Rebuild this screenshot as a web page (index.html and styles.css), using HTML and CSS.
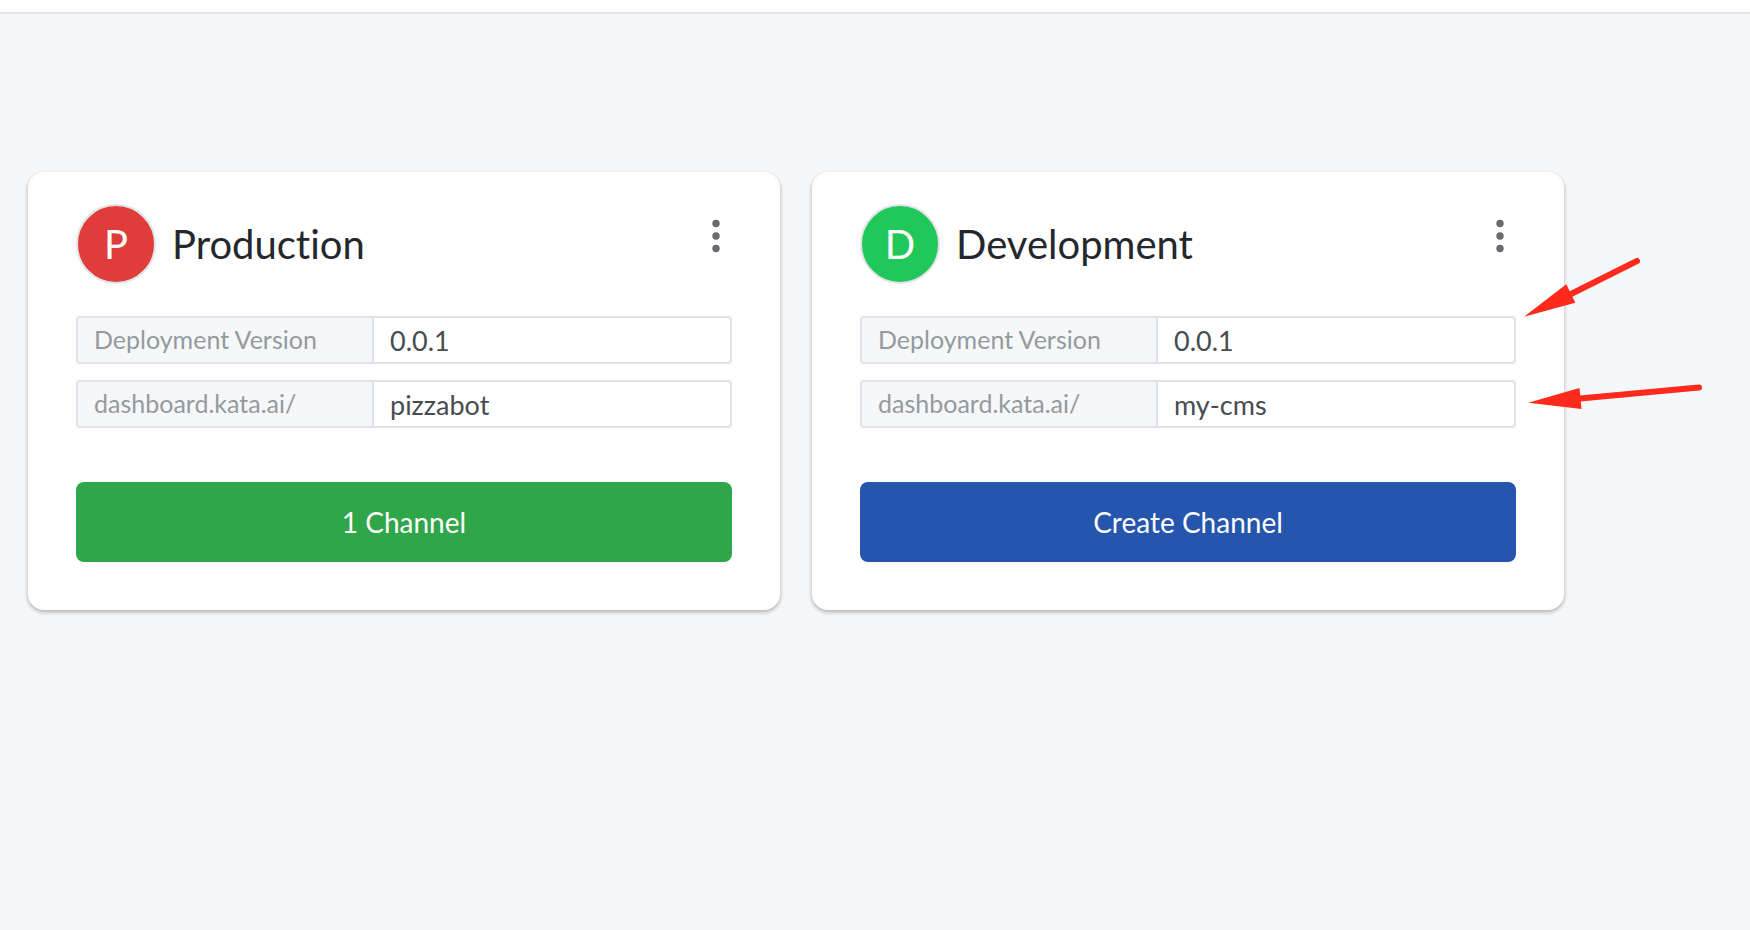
FILE: index.html
```html
<!DOCTYPE html>
<html lang="en">
<head>
<meta charset="utf-8">
<meta name="viewport" content="width=device-width, initial-scale=1">
<title>Environments</title>
<link rel="stylesheet" href="styles.css">
</head>
<body>
<header class="topbar"></header>
<main class="environments">
  <section class="card">
    <div class="card-header">
      <span class="avatar avatar-production">P</span>
      <h2 class="card-title">Production</h2>
      <button class="menu-button" type="button" aria-label="Production options">
        <svg class="menu-icon" viewBox="0 0 8 34" aria-hidden="true"><circle cx="4" cy="4.5" r="3.7"/><circle cx="4" cy="17" r="3.7"/><circle cx="4" cy="29.5" r="3.7"/></svg>
      </button>
    </div>
    <div class="fields">
      <div class="field">
        <label class="field-label" for="prod-version">Deployment Version</label>
        <input class="field-input" id="prod-version" type="text" value="0.0.1">
      </div>
      <div class="field">
        <label class="field-label" for="prod-url">dashboard.kata.ai/</label>
        <input class="field-input" id="prod-url" type="text" value="pizzabot">
      </div>
    </div>
    <button class="action action-success" type="button">1 Channel</button>
  </section>
  <section class="card">
    <div class="card-header">
      <span class="avatar avatar-development">D</span>
      <h2 class="card-title">Development</h2>
      <button class="menu-button" type="button" aria-label="Development options">
        <svg class="menu-icon" viewBox="0 0 8 34" aria-hidden="true"><circle cx="4" cy="4.5" r="3.7"/><circle cx="4" cy="17" r="3.7"/><circle cx="4" cy="29.5" r="3.7"/></svg>
      </button>
    </div>
    <div class="fields">
      <div class="field">
        <label class="field-label" for="dev-version">Deployment Version</label>
        <input class="field-input" id="dev-version" type="text" value="0.0.1">
      </div>
      <div class="field">
        <label class="field-label" for="dev-url">dashboard.kata.ai/</label>
        <input class="field-input" id="dev-url" type="text" value="my-cms">
      </div>
    </div>
    <button class="action action-primary" type="button">Create Channel</button>
    <svg class="arrows" viewBox="0 0 185 160" aria-hidden="true">
      <path class="arrow-shaft" d="M51 42 117 9M60 146.5 179 135.5"/>
      <path class="arrow-head" d="M4 64.700 46.300 32.300 55.300 50.700ZM8.300 150.700 59.500 136 61.500 157Z"/>
    </svg>
  </section>
</main>
</body>
</html>
```

FILE: styles.css
```css
* {
  box-sizing: border-box;
}

body {
  margin: 0;
  min-height: 100vh;
  background: #f5f7f9;
  color: #24282d;
  font-family: Lato, "Open Sans", sans-serif;
  font-size: 25px;
  font-variant-ligatures: none;
}

.topbar {
  height: 14px;
  background: #fff;
  border-bottom: 2px solid #e0e4e8;
}

.environments {
  display: grid;
  grid-template-columns: repeat(2, minmax(0, 752px));
  gap: 32px;
  padding: 158px 28px 48px;
}

.card {
  position: relative;
  padding: 32px 48px 48px;
  background: #fff;
  border-radius: 16px;
  box-shadow: 0 2px 4px rgba(0, 0, 0, 0.3);
}

.card-header {
  display: flex;
  align-items: center;
  gap: 16px;
  margin-bottom: 32px;
}

.avatar {
  display: flex;
  flex: none;
  align-items: center;
  justify-content: center;
  width: 80px;
  height: 80px;
  border: 2px solid #e0e4e8;
  border-radius: 50%;
  color: #fff;
  font-size: 40px;
}

.avatar-production {
  background: #e13c3c;
}

.avatar-development {
  background: #20c75a;
}

.card-title {
  flex: 1;
  min-width: 0;
  margin: 0;
  font-size: 40px;
  font-weight: 400;
  line-height: 48px;
}

.menu-button {
  display: flex;
  align-items: center;
  align-self: flex-start;
  justify-content: center;
  width: 32px;
  height: 64px;
  padding: 0;
  border: 0;
  background: none;
  cursor: pointer;
}

.menu-icon {
  width: 8px;
  height: 34px;
  fill: #676b6f;
}

.fields {
  display: grid;
  gap: 16px;
  margin-bottom: 54px;
}

.field {
  display: flex;
  height: 48px;
  border: 2px solid #e0e4e8;
  border-radius: 4px;
  background: #fff;
}

.field-label {
  flex: 0 1 296px;
  padding: 0 16px;
  border-right: 2px solid #e0e4e8;
  background: #f5f7f9;
  color: #949a9e;
  line-height: 42px;
  white-space: nowrap;
}

.field-input {
  flex: 1;
  min-width: 0;
  padding: 0 16px;
  border: 0;
  background: none;
  color: #484c4f;
  font: inherit;
  font-size: 27px;
}

.action {
  display: block;
  width: 100%;
  height: 80px;
  padding: 0 16px;
  border: 0;
  border-radius: 8px;
  color: #fff;
  font: inherit;
  font-size: 28px;
  cursor: pointer;
}

.action-success {
  background: #30a64a;
}

.action-primary {
  background: #2555ad;
}

.arrows {
  position: absolute;
  top: 80px;
  left: calc(100% - 44px);
  width: 185px;
  height: 160px;
  pointer-events: none;
}

.arrow-shaft {
  fill: none;
  stroke: #ff2a1c;
  stroke-width: 6;
  stroke-linecap: round;
}

.arrow-head {
  fill: #ff2a1c;
}
```
